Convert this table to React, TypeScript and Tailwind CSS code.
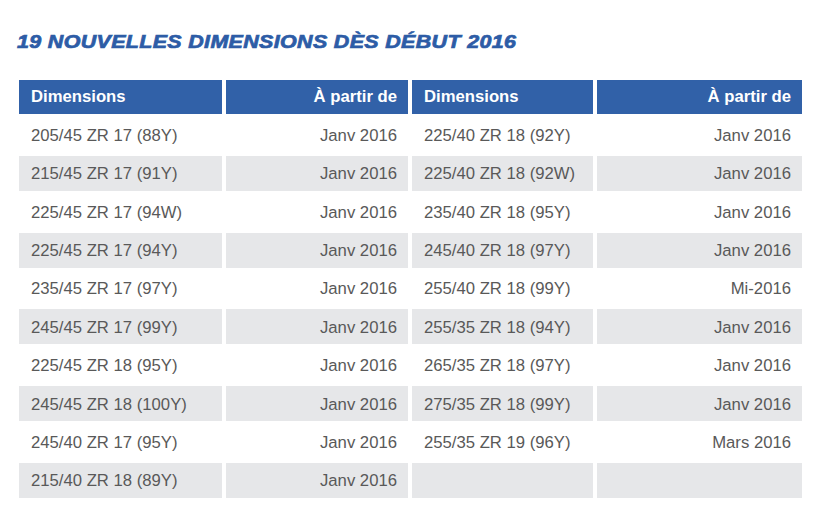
import React from "react";

const left: [string, string][] = [
  ["205/45 ZR 17 (88Y)", "Janv 2016"],
  ["215/45 ZR 17 (91Y)", "Janv 2016"],
  ["225/45 ZR 17 (94W)", "Janv 2016"],
  ["225/45 ZR 17 (94Y)", "Janv 2016"],
  ["235/45 ZR 17 (97Y)", "Janv 2016"],
  ["245/45 ZR 17 (99Y)", "Janv 2016"],
  ["225/45 ZR 18 (95Y)", "Janv 2016"],
  ["245/45 ZR 18 (100Y)", "Janv 2016"],
  ["245/40 ZR 17 (95Y)", "Janv 2016"],
  ["215/40 ZR 18 (89Y)", "Janv 2016"],
];
const right: [string, string][] = [
  ["225/40 ZR 18 (92Y)", "Janv 2016"],
  ["225/40 ZR 18 (92W)", "Janv 2016"],
  ["235/40 ZR 18 (95Y)", "Janv 2016"],
  ["245/40 ZR 18 (97Y)", "Janv 2016"],
  ["255/40 ZR 18 (99Y)", "Mi-2016"],
  ["255/35 ZR 18 (94Y)", "Janv 2016"],
  ["265/35 ZR 18 (97Y)", "Janv 2016"],
  ["275/35 ZR 18 (99Y)", "Janv 2016"],
  ["255/35 ZR 19 (96Y)", "Mars 2016"],
  ["", ""],
];

export default function App() {
  return (
    <div
      className="w-[829px] h-[525px] bg-white overflow-hidden"
      style={{ fontFamily: '"Liberation Sans", Arial, sans-serif' }}
    >
      <div className="pt-[31px] pl-[17px] h-[80px]">
        <h1 className="inline-block origin-left scale-x-[1.19] text-[18px] leading-[20px] font-black italic text-[#2d5ca6] tracking-[0.3px] [-webkit-text-stroke:0.7px_#2d5ca6]">
          19 NOUVELLES DIMENSIONS DÈS DÉBUT 2016
        </h1>
      </div>
      <div className="ml-[19px] grid grid-cols-[203px_182px_181px_205px] gap-x-[4px] gap-y-[3.4px] text-[16.7px]">
        <div className="h-[34px] bg-[#3161a8] text-white font-bold flex items-center pl-[12px]">Dimensions</div>
        <div className="h-[34px] bg-[#3161a8] text-white font-bold flex items-center justify-end pr-[11px]">À partir de</div>
        <div className="h-[34px] bg-[#3161a8] text-white font-bold flex items-center pl-[12px]">Dimensions</div>
        <div className="h-[34px] bg-[#3161a8] text-white font-bold flex items-center justify-end pr-[11px]">À partir de</div>
        {left.map((l, i) => {
          const r = right[i];
          const bg = i % 2 === 1 ? "bg-[#e6e7e9]" : "bg-white";
          return (
            <React.Fragment key={i}>
              <div className={`h-[35px] ${bg} text-[#595959] flex items-center pl-[12px] pt-[1px]`}>{l[0]}</div>
              <div className={`h-[35px] ${bg} text-[#595959] flex items-center justify-end pr-[11px] pt-[1px]`}>{l[1]}</div>
              <div className={`h-[35px] ${bg} text-[#595959] flex items-center pl-[12px] pt-[1px]`}>{r[0]}</div>
              <div className={`h-[35px] ${bg} text-[#595959] flex items-center justify-end pr-[11px] pt-[1px]`}>{r[1]}</div>
            </React.Fragment>
          );
        })}
      </div>
    </div>
  );
}
